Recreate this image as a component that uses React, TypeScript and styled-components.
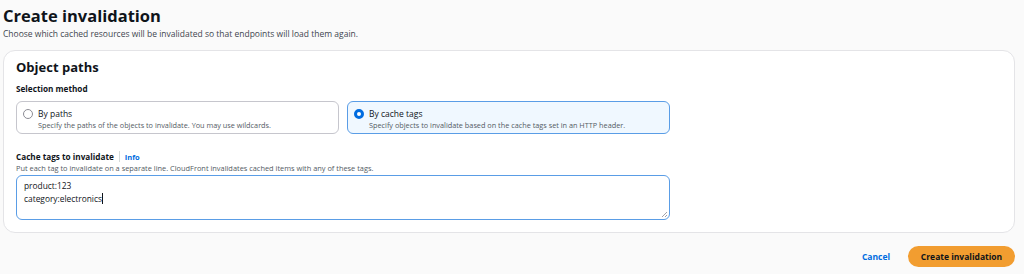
import styled, { createGlobalStyle } from 'styled-components';

const GlobalStyle = createGlobalStyle`
  html, body {
    margin: 0;
    padding: 0;
    background: #fafafa;
    font-family: "Open Sans", "Noto Sans", sans-serif;
    color: #0f141a;
  }
`;

const methods = [
  {
    id: 'paths',
    title: 'By paths',
    desc: 'Specify the paths of the objects to invalidate. You may use wildcards.',
  },
  {
    id: 'tags',
    title: 'By cache tags',
    desc: 'Specify objects to invalidate based on the cache tags set in an HTTP header.',
  },
];

export default function App() {
  const selected = 'tags';

  return (
    <Page>
      <GlobalStyle />
      <Header>
        <Title>Create invalidation</Title>
        <Subtitle>
          Choose which cached resources will be invalidated so that endpoints will load them again.
        </Subtitle>
      </Header>

      <Card>
        <CardTitle>Object paths</CardTitle>

        <Field>
          <Label>Selection method</Label>
          <Options>
            {methods.map((m) => (
              <Option key={m.id} $active={m.id === selected}>
                <Radio $active={m.id === selected} />
                <OptionText>
                  <OptionTitle>{m.title}</OptionTitle>
                  <OptionDesc>{m.desc}</OptionDesc>
                </OptionText>
              </Option>
            ))}
          </Options>
        </Field>

        <Field>
          <LabelRow>
            <Label>Cache tags to invalidate</Label>
            <Divider />
            <Info>Info</Info>
          </LabelRow>
          <Hint>
            Put each tag to invalidate on a separate line. CloudFront invalidates cached items with any of these tags.
          </Hint>
          <TextArea role="textbox">
            <div>product:123</div>
            <div>
              category:electronics<Caret />
            </div>
            <Grip viewBox="0 0 8 8">
              <path d="M7 2 L2 7 M7 5 L5 7" stroke="#8c8c94" strokeWidth="0.8" />
            </Grip>
          </TextArea>
        </Field>
      </Card>

      <Actions>
        <LinkButton>Cancel</LinkButton>
        <PrimaryButton>Create invalidation</PrimaryButton>
      </Actions>
    </Page>
  );
}

const Page = styled.div`
  width: 1024px;
  height: 274px;
  box-sizing: border-box;
  padding: 5px 9px 0 3px;
  display: flex;
  flex-direction: column;
`;

const Header = styled.div`
  display: flex;
  flex-direction: column;
  gap: 1px;
`;

const Title = styled.h1`
  margin: 0;
  font-size: 16.5px;
  line-height: 22px;
  font-weight: 700;
`;

const Subtitle = styled.p`
  margin: -1px 0 0;
  font-size: 8.5px;
  line-height: 14px;
  color: #424650;
`;

const Card = styled.div`
  margin-top: 9px;
  height: 183px;
  box-sizing: border-box;
  background: #fff;
  border: 1px solid #e4e4e7;
  border-radius: 12px;
  padding: 7px 12px 0 12px;
  display: flex;
  flex-direction: column;
`;

const CardTitle = styled.h2`
  margin: 0;
  font-size: 13px;
  line-height: 18px;
  font-weight: 700;
`;

const Field = styled.div`
  margin-top: 6px;
  display: flex;
  flex-direction: column;
`;

const Label = styled.div`
  font-size: 8.2px;
  line-height: 13px;
  font-weight: 700;
`;

const Options = styled.div`
  margin-top: 6px;
  display: flex;
  gap: 8px;
`;

const Option = styled.div<{ $active: boolean }>`
  width: 323px;
  height: 33px;
  box-sizing: border-box;
  border: 1px solid ${({ $active }) => ($active ? '#5a9de6' : '#c6c6cd')};
  background: ${({ $active }) => ($active ? '#f0f8ff' : '#fff')};
  border-radius: 6px;
  padding: 5px 8px 0 6px;
  display: flex;
  gap: 5px;
`;

const Radio = styled.span<{ $active: boolean }>`
  flex: none;
  margin-top: 2px;
  width: 10px;
  height: 10px;
  box-sizing: border-box;
  border-radius: 50%;
  background: #fff;
  border: ${({ $active }) => ($active ? '3px solid #006ce0' : '1px solid #8c8c94')};
`;

const OptionText = styled.div`
  display: flex;
  flex-direction: column;
`;

const OptionTitle = styled.div`
  font-size: 8.5px;
  line-height: 13px;
`;

const OptionDesc = styled.div`
  font-size: 7.3px;
  line-height: 11px;
  color: #545b64;
`;

const LabelRow = styled.div`
  margin-top: 10px;
  display: flex;
  align-items: center;
  gap: 5px;
`;

const Divider = styled.span`
  width: 1px;
  height: 11px;
  background: #d5dbdb;
`;

const Info = styled.a`
  font-size: 7.5px;
  font-weight: 700;
  color: #006ce0;
`;

const Hint = styled.div`
  font-size: 7.4px;
  line-height: 11px;
  color: #545b64;
`;

const TextArea = styled.div`
  position: relative;
  margin-top: 1px;
  width: 654px;
  height: 45px;
  box-sizing: border-box;
  border: 1.5px solid #5a9de6;
  border-radius: 6px;
  padding: 3px 7px;
  font-size: 8.4px;
  line-height: 13px;
`;

const Caret = styled.span`
  display: inline-block;
  width: 1px;
  height: 11px;
  vertical-align: -2px;
  background: #0f141a;
`;

const Grip = styled.svg`
  position: absolute;
  right: 1px;
  bottom: 1px;
  width: 8px;
  height: 8px;
`;

const Actions = styled.div`
  margin-top: 13px;
  display: flex;
  justify-content: flex-end;
  align-items: center;
  gap: 18px;
`;

const LinkButton = styled.button`
  border: none;
  background: none;
  padding: 0;
  font-family: inherit;
  font-size: 8.5px;
  font-weight: 700;
  color: #006ce0;
`;

const PrimaryButton = styled.button`
  border: none;
  width: 107px;
  height: 21px;
  border-radius: 11px;
  background: #f29d30;
  font-family: inherit;
  font-size: 8.5px;
  font-weight: 700;
  color: #0f141a;
`;
